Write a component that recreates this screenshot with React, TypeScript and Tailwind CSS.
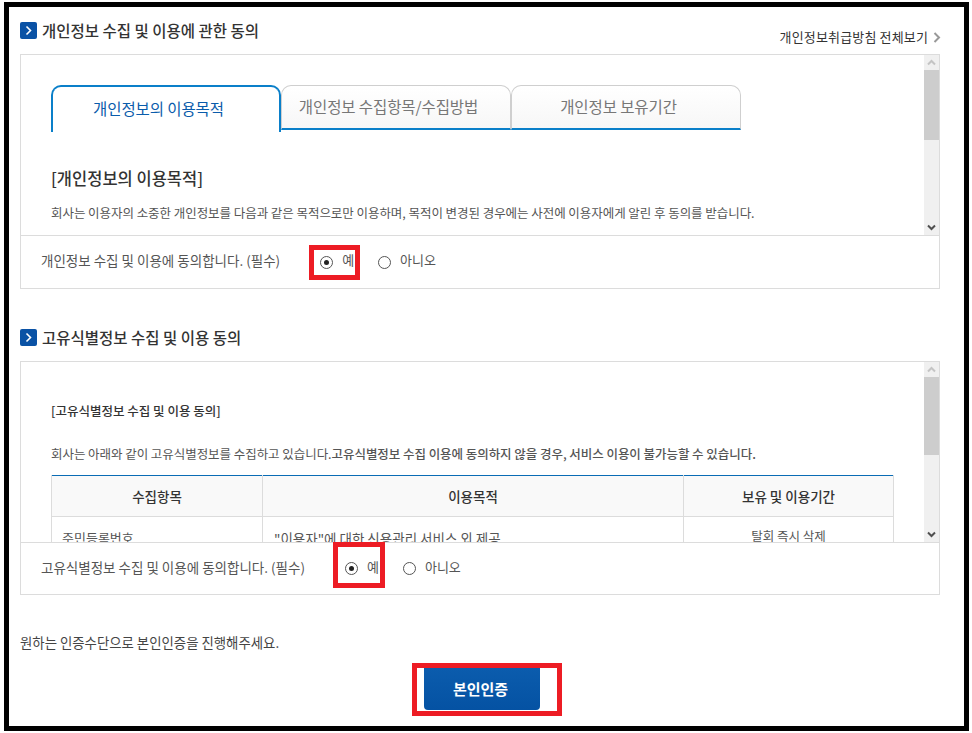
const font = { fontFamily: '"Noto Sans CJK KR", "Noto Sans", sans-serif' };

function SectionIcon() {
  return (
    <span className="flex h-[17px] w-[17px] shrink-0 items-center justify-center rounded-[2px] bg-[#0a52a5]">
      <svg width="9" height="11" viewBox="0 0 9 11" fill="none">
        <path d="M2.5 1.5 L6.5 5.5 L2.5 9.5" stroke="#fff" strokeWidth="1.6" />
      </svg>
    </span>
  );
}

function Scrollbar({ thumb }: { thumb: string }) {
  return (
    <div className="flex h-full w-[15px] shrink-0 flex-col bg-[#f0f0f0]">
      <div className="flex h-[15px] items-center justify-center">
        <svg width="9" height="7" viewBox="0 0 9 7" fill="none">
          <path d="M1 5.5 L4.5 2 L8 5.5" stroke="#c4c4c4" strokeWidth="2" />
        </svg>
      </div>
      <div className={`${thumb} bg-[#cdcdcd]`} />
      <div className="flex-1" />
      <div className="flex h-[15px] items-center justify-center">
        <svg width="9" height="7" viewBox="0 0 9 7" fill="none">
          <path d="M1 1.5 L4.5 5 L8 1.5" stroke="#505050" strokeWidth="2" />
        </svg>
      </div>
    </div>
  );
}

function Radio({ checked }: { checked?: boolean }) {
  return (
    <span className="flex h-[13px] w-[13px] shrink-0 items-center justify-center rounded-full border border-[#555] bg-white">
      {checked && <span className="h-[5px] w-[5px] rounded-full bg-[#222]" />}
    </span>
  );
}

function Agreement({ label, redClass }: { label: string; redClass: string }) {
  return (
    <div className="flex flex-1 items-center pl-5 text-[13.5px] leading-[18px] text-[#555]">
      <span className="-mt-[4px]">{label}</span>
      <div className="relative ml-[40px] flex h-[18px] items-center">
        <div className={`absolute border-[5px] border-[#ed1c24] ${redClass}`} />
        <Radio checked />
        <span className="-mt-[4px] ml-[9px] text-[13px]">예</span>
        <span className="ml-[24px]"><Radio /></span>
        <span className="-mt-[4px] ml-[9px] text-[13px]">아니오</span>
      </div>
    </div>
  );
}

export default function App() {
  return (
    <div className="h-[733px] w-[972px] overflow-hidden bg-white pl-[4px] pt-[2px]" style={font}>
      <div className="h-[729px] w-[965px] border-[5px] border-black bg-white px-[11px] pt-[15px]">
        {/* Section 1 */}
        <div className="flex h-[32px] items-start justify-between">
          <div className="flex items-center gap-[5px]">
            <SectionIcon />
            <h2 className="-mt-[2px] text-[15.5px] font-medium leading-[16px] text-[#333]">개인정보 수집 및 이용에 관한 동의</h2>
          </div>
          <div className="mr-[12px] mt-[6px] flex items-center gap-[5px] text-[13px] leading-[18px] text-[#333] tracking-[0.15px]">
            개인정보취급방침 전체보기
            <svg width="8" height="11" viewBox="0 0 8 11" fill="none">
              <path d="M1.5 1 L6 5.5 L1.5 10" stroke="#999" strokeWidth="2" />
            </svg>
          </div>
        </div>
        <section className="flex h-[235px] w-[920px] flex-col border border-[#dcdcdc]">
          <div className="flex h-[181px] border-b border-[#dcdcdc]">
            <div className="flex-1 overflow-hidden pl-[30px] pt-[30px]">
              <div className="flex h-[47px] w-[690px] items-start">
                <div className="flex h-[47px] w-[230px] items-center justify-center rounded-t-[10px] border-x-2 border-t-2 border-[#0a7fc9] bg-white pb-[2px] pr-[15px] text-[15.5px] text-[#0a5cab] tracking-[-0.1px]">
                  개인정보의 이용목적
                </div>
                <div className="flex h-[45px] w-[230px] items-center justify-center rounded-t-[10px] border-x border-t border-b-2 border-[#cfcfcf] border-b-[#0a7fc9] bg-gradient-to-b from-white to-[#f7f7f7] pr-[15px] text-[15.5px] text-[#777] tracking-[-0.1px]">
                  개인정보 수집항목/수집방법
                </div>
                <div className="flex h-[45px] w-[230px] items-center justify-center rounded-t-[10px] border-x border-t border-b-2 border-[#cfcfcf] border-b-[#0a7fc9] bg-gradient-to-b from-white to-[#f7f7f7] pr-[15px] text-[15.5px] text-[#777] tracking-[-0.1px]">
                  개인정보 보유기간
                </div>
              </div>
              <h3 className="mt-[35px] text-[16.5px] font-medium leading-[22px] text-[#333]">[개인정보의 이용목적]</h3>
              <p className="mt-[15px] whitespace-nowrap text-[12.5px] leading-[18px] text-[#555] tracking-[-0.05px]">
                회사는 이용자의 소중한 개인정보를 다음과 같은 목적으로만 이용하며, 목적이 변경된 경우에는 사전에 이용자에게 알린 후 동의를 받습니다.
              </p>
            </div>
            <Scrollbar thumb="h-[70px]" />
          </div>
          <Agreement label="개인정보 수집 및 이용에 동의합니다. (필수)" redClass="-left-[11px] -top-[8px] h-[35px] w-[51px]" />
        </section>

        {/* Section 2 */}
        <div className="mt-[40px] flex h-[32px] items-start">
          <div className="flex items-center gap-[5px]">
            <SectionIcon />
            <h2 className="-mt-[2px] text-[15.5px] font-medium leading-[16px] text-[#333]">고유식별정보 수집 및 이용 동의</h2>
          </div>
        </div>
        <section className="flex h-[234px] w-[920px] flex-col border border-[#dcdcdc]">
          <div className="flex h-[181px] border-b border-[#dcdcdc]">
            <div className="flex-1 overflow-hidden pl-[30px] pt-[40px]">
              <h3 className="text-[12.5px] font-medium leading-[18px] text-[#333]">[고유식별정보 수집 및 이용 동의]</h3>
              <p className="mt-[25px] whitespace-nowrap text-[12.5px] leading-[18px] text-[#555] tracking-[-0.05px]">
                회사는 아래와 같이 고유식별정보를 수집하고 있습니다.<span className="font-medium">고유식별정보 수집 이용에 동의하지 않을 경우, 서비스 이용이 불가능할 수 있습니다.</span>
              </p>
              <table className="mt-[12px] w-[843px] table-fixed border-collapse border-t border-[#0a6cb5] text-[13.5px]">
                <thead>
                  <tr className="h-[41px] bg-[#f9f9f9] text-[#333]">
                    <th className="w-[211px] border border-t-0 border-[#dcdcdc] font-medium">수집항목</th>
                    <th className="w-[421px] border border-t-0 border-[#dcdcdc] font-medium">이용목적</th>
                    <th className="border border-t-0 border-[#dcdcdc] font-medium">보유 및 이용기간</th>
                  </tr>
                </thead>
                <tbody className="text-[#555]">
                  <tr className="h-[40px]">
                    <td className="border border-[#dcdcdc] pl-[10px] pt-[12px] align-top text-[13px] leading-[18px]">주민등록번호</td>
                    <td className="border border-[#dcdcdc] pl-[11px] pt-[12px] align-top leading-[18px]">"이용자"에 대한 신용관리 서비스 외 제공</td>
                    <td className="border border-[#dcdcdc] pt-[10px] text-center align-top text-[12.5px] leading-[18px]">탈회 즉시 삭제</td>
                  </tr>
                </tbody>
              </table>
            </div>
            <Scrollbar thumb="h-[78px]" />
          </div>
          <Agreement label="고유식별정보 수집 및 이용에 동의합니다. (필수)" redClass="-left-[12px] -top-[18px] h-[46px] w-[52px]" />
        </section>

        <p className="mt-[38px] text-[13.4px] leading-[18px] text-[#444]">원하는 인증수단으로 본인인증을 진행해주세요.</p>
        <div className="relative ml-[404px] mt-[12px] w-[116px] pt-[5px]">
          <button className="flex h-[42px] w-[116px] items-center justify-center rounded-b-[4px] bg-gradient-to-b from-[#0b5cad] to-[#0552a3] pr-[3px] text-[15px] font-bold text-white">
            본인인증
          </button>
          <div className="absolute -left-[12px] top-0 h-[53px] w-[150px] border-[5px] border-[#ed1c24]" />
        </div>
      </div>
    </div>
  );
}
